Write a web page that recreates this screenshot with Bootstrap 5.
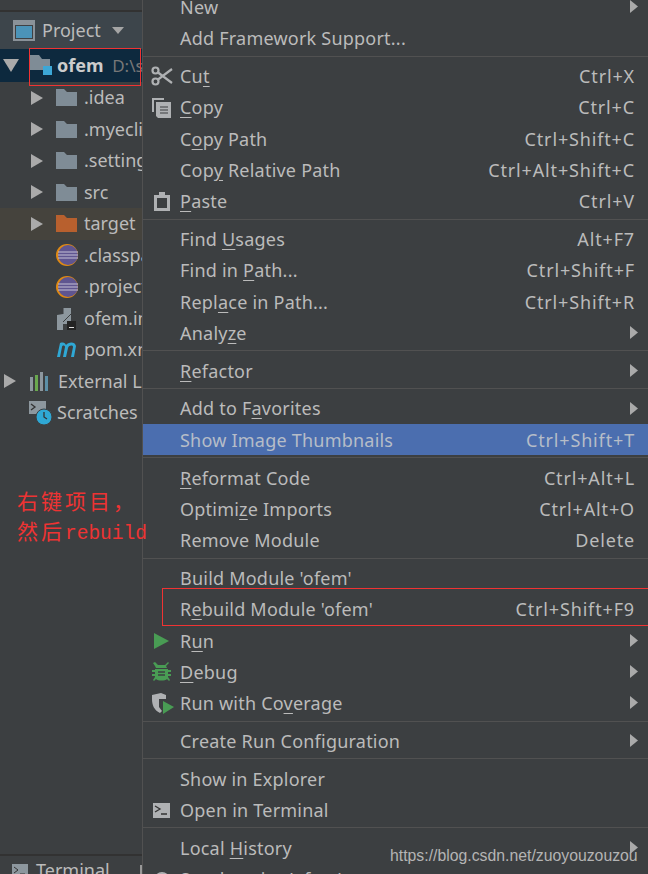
<!DOCTYPE html>
<html lang="en"><head><meta charset="utf-8"><title>Project menu</title>
<link href="https://cdn.jsdelivr.net/npm/bootstrap@5.3.0/dist/css/bootstrap.min.css" rel="stylesheet">
<style>
html,body{height:874px;overflow:hidden;background:#3c3f41}
body{font-family:"Noto Sans",sans-serif;font-size:18px;color:#bbb;position:relative}
.shell{height:874px}
.side{width:142px;flex:none;overflow:hidden;height:874px}
.topline{height:12px;border-bottom:2px solid #323232}
.head{height:37px;background:#3d454b;padding-left:13px;gap:7px}
.row-t{height:31.5px;white-space:nowrap;flex:none;padding-left:56px;gap:7px}
.row-t.lvl0{padding-left:29px}
.row-t.sel{background:#0d293e;color:#ccc;padding-left:3px;height:33px}
.row-t.sel .nm{margin-left:-3px}
.row-t.tgt{background:#45433d}
.row-t svg{flex:none}
.arr{margin-left:-25px;margin-right:6px}
.lvl0 .arr{position:absolute;left:4px;margin:0}
.gray{color:#777;font-weight:400;font-size:17px}
.btm{position:absolute;left:0;top:854px;width:142px;height:20px;border-top:2px solid #323232;padding-left:12px;gap:8px;overflow:hidden}
.btm .bar{position:absolute;left:140px;top:9px;width:2px;height:12px;background:#999}
.menu-p{flex:1;height:874px;overflow:hidden;border-left:1px solid #515151;margin:0;padding:0}
.mnu{position:static!important;display:block;float:none;width:100%;margin:-9px 0 0;padding:0;border:0;border-radius:0;background:transparent;font-size:18px;letter-spacing:.22px}
.itm{height:31.3px;padding:1.5px 13px 0 0;color:#bbb;white-space:nowrap}
.itm:hover,.itm:focus{background:transparent;color:#bbb}
.itm.active-b,.itm.active-b:hover{background:#4b6eaf;color:#b6bdc8}
.slot{width:37px;flex:none}
.keys{margin-left:auto;letter-spacing:.85px}
.arrow-r{position:absolute;right:10px;top:9px}
.sepr{height:6.5px;margin:0;padding-top:2px}
.sepr hr{margin:0;border:0;border-top:1px solid #515151;opacity:1}
.itm u{text-underline-offset:3px}
.red-rect{position:absolute;border:1px solid #f03333;pointer-events:none}
.r1{left:29px;top:48px;width:112px;height:38px}
.r2{left:162px;top:588px;width:487px;height:38px;border-right:0}
.note{position:absolute;left:17px;top:485px;color:#e33;font-family:"Noto Sans CJK SC",serif;font-size:21px;line-height:30px;letter-spacing:3px;white-space:nowrap}
.note .lat{font-family:"Liberation Mono",monospace;font-size:19.5px;letter-spacing:0}
.mark-w{position:absolute;left:390px;top:844px;font-family:"Liberation Sans",sans-serif;font-size:15.8px;color:#b4b4b4;white-space:nowrap}
</style></head><body>
<div class="shell d-flex">
<div class="side d-flex flex-column">
 <div class="topline"></div>
 <div class="head d-flex align-items-center">
  <svg width="22" height="21" viewBox="0 0 22 21"><rect width="22" height="21" fill="#8a9299"/><rect x="2" y="5" width="18" height="14" fill="#3f4144"/><rect x="3" y="6" width="16" height="12" fill="#4b93b8"/></svg>
  <span>Project</span>
  <svg class="ms-1" width="12" height="7" viewBox="0 0 12 7"><path d="M0 0h12L6 7z" fill="#a5a5a5"/></svg>
 </div>
 <div class="row-t sel d-flex align-items-center">
  <svg width="16" height="13" viewBox="0 0 16 13" style="margin-right:4px"><path d="M0 0h16L8 13z" fill="#aaa"/></svg>
  <svg width="23" height="22" viewBox="0 0 23 22"><path d="M0 0h9l3 4h8v11H0z" fill="#7f8c96"/><rect x="13" y="11" width="9" height="9" fill="#3ca7d6"/></svg>
  <span class="nm fw-bold">ofem <span class="gray ms-1">D:\sp</span></span>
 </div>
 <div class="row-t d-flex align-items-center"><svg class="arr" width="12" height="14" viewBox="0 0 12 14"><path d="M0 0l12 7-12 7z" fill="#aaa"/></svg><svg width="21" height="17" viewBox="0 0 21 17"><path d="M0 0h8l3 3h10v14H0z" fill="#7f8c96"/></svg><span>.idea</span></div>
 <div class="row-t d-flex align-items-center"><svg class="arr" width="12" height="14" viewBox="0 0 12 14"><path d="M0 0l12 7-12 7z" fill="#aaa"/></svg><svg width="21" height="17" viewBox="0 0 21 17"><path d="M0 0h8l3 3h10v14H0z" fill="#7f8c96"/></svg><span>.myeclipse</span></div>
 <div class="row-t d-flex align-items-center"><svg class="arr" width="12" height="14" viewBox="0 0 12 14"><path d="M0 0l12 7-12 7z" fill="#aaa"/></svg><svg width="21" height="17" viewBox="0 0 21 17"><path d="M0 0h8l3 3h10v14H0z" fill="#7f8c96"/></svg><span>.settings</span></div>
 <div class="row-t d-flex align-items-center"><svg class="arr" width="12" height="14" viewBox="0 0 12 14"><path d="M0 0l12 7-12 7z" fill="#aaa"/></svg><svg width="21" height="17" viewBox="0 0 21 17"><path d="M0 0h8l3 3h10v14H0z" fill="#7f8c96"/></svg><span>src</span></div>
 <div class="row-t tgt d-flex align-items-center"><svg class="arr" width="12" height="14" viewBox="0 0 12 14"><path d="M0 0l12 7-12 7z" fill="#aaa"/></svg><svg width="21" height="17" viewBox="0 0 21 17"><path d="M0 0h8l3 3h10v14H0z" fill="#b8602e"/></svg><span>target</span></div>
 <div class="row-t d-flex align-items-center"><svg width="23" height="22" viewBox="0 0 23 22"><circle cx="11" cy="11" r="11" fill="#e08a14"/><circle cx="12" cy="11" r="10" fill="#5f5590"/><path d="M2 8h20M2 11h20M2 14h20" stroke="#c5c2d6" stroke-width="1.2"/></svg><span style="margin-left:-2px">.classpath</span></div>
 <div class="row-t d-flex align-items-center"><svg width="23" height="22" viewBox="0 0 23 22"><circle cx="11" cy="11" r="11" fill="#e08a14"/><circle cx="12" cy="11" r="10" fill="#5f5590"/><path d="M2 8h20M2 11h20M2 14h20" stroke="#c5c2d6" stroke-width="1.2"/></svg><span style="margin-left:-2px">.project</span></div>
 <div class="row-t d-flex align-items-center"><svg width="21" height="23" viewBox="0 0 21 23"><path d="M1 8l6-1V1h8v16H7v6H1z" fill="#8d979e"/><path d="M7 7V1" stroke="#3c3f41"/><path d="M7 15l8-8" stroke="#3c3f41"/><rect x="11" y="14" width="9" height="9" fill="#232323"/><rect x="13" y="20" width="5" height="1" fill="#ddd"/></svg><span>ofem.iml</span></div>
 <div class="row-t d-flex align-items-center"><svg width="21" height="15" viewBox="0 0 21 15"><path d="M1 15L4 1c4-1 5 0 6 2 2-3 9-4 10 1l-2 11h-3l2-10c0-2-4-2-5 1l-2 9H7l2-10c0-2-3-2-3 0L4 15z" fill="#2fa8d5"/></svg><span>pom.xml</span></div>
 <div class="row-t lvl0 d-flex align-items-center position-relative"><svg class="arr" width="12" height="14" viewBox="0 0 12 14"><path d="M0 0l12 7-12 7z" fill="#aaa"/></svg><svg width="22" height="19" viewBox="0 0 22 19"><path d="M1 5h3v14H1z" fill="#8d979e"/><path d="M6 3h3v16H6z" fill="#6aa84f"/><path d="M11 0h3v19h-3z" fill="#8d979e"/><path d="M16 4h3v15h-3z" fill="#5c8fa6"/></svg><span>External Libraries</span></div>
 <div class="row-t lvl0 d-flex align-items-center"><svg width="24" height="24" viewBox="0 0 24 24"><path d="M0 0h17v13H0z" fill="#8d979e"/><path d="M2 3l4 3-4 3" stroke="#333" fill="none" stroke-width="1.3"/><circle cx="15" cy="16" r="8" fill="#2fa8d5" stroke="#3c3f41"/><path d="M15 11v5l3 2" stroke="#333" stroke-width="1.3" fill="none"/></svg><span style="margin-left:-3px">Scratches</span></div>
 <div class="btm d-flex align-items-start">
  <svg width="16" height="14" viewBox="0 0 16 14" class="mt-2"><rect width="16" height="14" fill="#8d979e"/><path d="M2 3l4 3-4 3M8 10h5" stroke="#333" fill="none"/></svg>
  <span style="margin-top:2px;line-height:24px">Terminal</span><span class="bar"></span>
 </div>
</div>
<nav class="menu-p">
<div class="dropdown-menu mnu show">
<a class="dropdown-item itm d-flex align-items-center position-relative"><span class="slot"></span>New<svg class="arrow-r" width="8" height="13" viewBox="0 0 8 13"><path d="M0 0l8 6.500-8 6.500z" fill="#aaa"/></svg></a>
<a class="dropdown-item itm d-flex align-items-center"><span class="slot"></span>Add Framework Support...</a>
<div class="sepr"><hr></div>
<a class="dropdown-item itm d-flex align-items-center"><span class="slot d-flex justify-content-center"><svg width="22" height="20" viewBox="0 0 22 20"><g fill="none" stroke="#afb1b3" stroke-width="2.200"><circle cx="4.500" cy="4.500" r="3"/><circle cx="4.500" cy="15.500" r="3"/><path d="M7 6.500L21 17M7 13.500L21 3"/></g></svg></span><span>Cu<u>t</u></span><span class="keys">Ctrl+X</span></a>
<a class="dropdown-item itm d-flex align-items-center"><span class="slot d-flex justify-content-center"><svg width="20" height="20" viewBox="0 0 20 20"><path d="M0 0h12v2H2v12H0z" fill="#afb1b3"/><path d="M4 4h15v16H6l-2-2z" fill="#afb1b3"/><path d="M8 9h8M8 12h8M8 15h8" stroke="#3c3f41" stroke-width="1.200"/></svg></span><span><u>C</u>opy</span><span class="keys">Ctrl+C</span></a>
<a class="dropdown-item itm d-flex align-items-center"><span class="slot"></span><span>C<u>o</u>py Path</span><span class="keys">Ctrl+Shift+C</span></a>
<a class="dropdown-item itm d-flex align-items-center"><span class="slot"></span><span>Cop<u>y</u> Relative Path</span><span class="keys">Ctrl+Alt+Shift+C</span></a>
<a class="dropdown-item itm d-flex align-items-center"><span class="slot d-flex justify-content-center"><svg width="16" height="19" viewBox="0 0 16 19"><path d="M0 3h5V0h6v3h5v16H0z" fill="#afb1b3"/><rect x="3" y="6" width="10" height="10" fill="#3c3f41"/></svg></span><span><u>P</u>aste</span><span class="keys">Ctrl+V</span></a>
<div class="sepr"><hr></div>
<a class="dropdown-item itm d-flex align-items-center"><span class="slot"></span><span>Find <u>U</u>sages</span><span class="keys">Alt+F7</span></a>
<a class="dropdown-item itm d-flex align-items-center"><span class="slot"></span><span>Find in <u>P</u>ath...</span><span class="keys">Ctrl+Shift+F</span></a>
<a class="dropdown-item itm d-flex align-items-center"><span class="slot"></span><span>Repl<u>a</u>ce in Path...</span><span class="keys">Ctrl+Shift+R</span></a>
<a class="dropdown-item itm d-flex align-items-center position-relative"><span class="slot"></span><span>Analy<u>z</u>e</span><svg class="arrow-r" width="8" height="13" viewBox="0 0 8 13"><path d="M0 0l8 6.500-8 6.500z" fill="#aaa"/></svg></a>
<div class="sepr"><hr></div>
<a class="dropdown-item itm d-flex align-items-center position-relative"><span class="slot"></span><span><u>R</u>efactor</span><svg class="arrow-r" width="8" height="13" viewBox="0 0 8 13"><path d="M0 0l8 6.500-8 6.500z" fill="#aaa"/></svg></a>
<div class="sepr"><hr></div>
<a class="dropdown-item itm d-flex align-items-center position-relative"><span class="slot"></span><span>Add to F<u>a</u>vorites</span><svg class="arrow-r" width="8" height="13" viewBox="0 0 8 13"><path d="M0 0l8 6.500-8 6.500z" fill="#aaa"/></svg></a>
<a class="dropdown-item itm active-b d-flex align-items-center"><span class="slot"></span><span>Show Image Thumbnails</span><span class="keys">Ctrl+Shift+T</span></a>
<div class="sepr"><hr></div>
<a class="dropdown-item itm d-flex align-items-center"><span class="slot"></span><span><u>R</u>eformat Code</span><span class="keys">Ctrl+Alt+L</span></a>
<a class="dropdown-item itm d-flex align-items-center"><span class="slot"></span><span>Optimi<u>z</u>e Imports</span><span class="keys">Ctrl+Alt+O</span></a>
<a class="dropdown-item itm d-flex align-items-center"><span class="slot"></span><span>Remove Module</span><span class="keys">Delete</span></a>
<div class="sepr"><hr></div>
<a class="dropdown-item itm d-flex align-items-center"><span class="slot"></span><span>Build <u>M</u>odule 'ofem'</span></a>
<a class="dropdown-item itm d-flex align-items-center"><span class="slot"></span><span>R<u>e</u>build Module 'ofem'</span><span class="keys">Ctrl+Shift+F9</span></a>
<a class="dropdown-item itm d-flex align-items-center position-relative"><span class="slot d-flex justify-content-center"><svg width="15" height="16" viewBox="0 0 15 16"><path d="M0 0l15 8-15 8z" fill="#499c54"/></svg></span><span>R<u>u</u>n</span><svg class="arrow-r" width="8" height="13" viewBox="0 0 8 13"><path d="M0 0l8 6.500-8 6.500z" fill="#aaa"/></svg></a>
<a class="dropdown-item itm d-flex align-items-center position-relative"><span class="slot d-flex justify-content-center"><svg width="19" height="20" viewBox="0 0 19 20"><path d="M3 0l3 3h7l3-3 1 1-3 3 1 2H4L3 4 1 1z" fill="#499c54"/><path d="M0 8h3V7h13v1h3v2h-3v2h3v2h-3v1l2 3-1 1-2-2c-2 2-9 2-11 0l-2 2-1-1 2-3v-1H0v-2h3v-2H0z" fill="#499c54"/><path d="M6 10h7M6 13h7" stroke="#3c3f41" stroke-width="1.300"/></svg></span><span><u>D</u>ebug</span><svg class="arrow-r" width="8" height="13" viewBox="0 0 8 13"><path d="M0 0l8 6.500-8 6.500z" fill="#aaa"/></svg></a>
<a class="dropdown-item itm d-flex align-items-center position-relative"><span class="slot d-flex justify-content-center"><svg width="24" height="21" viewBox="0 0 24 21"><path d="M2 2l9-2 5 2v4H9v8l3 4-2 2c-6-3-8-8-8-14z" fill="#afb1b3"/><path d="M13 8l11 6-11 7z" fill="#499c54"/></svg></span><span>Run with Co<u>v</u>erage</span><svg class="arrow-r" width="8" height="13" viewBox="0 0 8 13"><path d="M0 0l8 6.500-8 6.500z" fill="#aaa"/></svg></a>
<div class="sepr"><hr></div>
<a class="dropdown-item itm d-flex align-items-center position-relative"><span class="slot"></span><span>Create Run Configuration</span><svg class="arrow-r" width="8" height="13" viewBox="0 0 8 13"><path d="M0 0l8 6.500-8 6.500z" fill="#aaa"/></svg></a>
<div class="sepr"><hr></div>
<a class="dropdown-item itm d-flex align-items-center"><span class="slot"></span><span>Show in Explorer</span></a>
<a class="dropdown-item itm d-flex align-items-center"><span class="slot d-flex justify-content-center"><svg width="17" height="15" viewBox="0 0 17 15"><rect width="17" height="15" fill="#afb1b3"/><path d="M2 3l5 3-5 3M8 11h6" stroke="#333" fill="none" stroke-width="1.300"/></svg></span><span>Open in Terminal</span></a>
<div class="sepr"><hr></div>
<a class="dropdown-item itm d-flex align-items-center position-relative"><span class="slot"></span><span>Local <u>H</u>istory</span><svg class="arrow-r" width="8" height="13" viewBox="0 0 8 13"><path d="M0 0l8 6.500-8 6.500z" fill="#aaa"/></svg></a>
<a class="dropdown-item itm d-flex align-items-center"><span class="slot d-flex justify-content-center"><svg width="18" height="18" viewBox="0 0 18 18"><circle cx="9" cy="9" r="7" fill="none" stroke="#afb1b3" stroke-width="2"/></svg></span><span>Synchronize 'ofem'</span></a>
</div>
</nav>
</div>
<div class="red-rect r1"></div>
<div class="red-rect r2"></div>
<div class="note">右键项目，<br>然后<span class="lat">rebuild</span></div>
<div class="mark-w">https://blog.csdn.net/zuoyouzouzou</div>
<script src="https://cdn.jsdelivr.net/npm/bootstrap@5.3.0/dist/js/bootstrap.bundle.min.js"></script>
</body></html>
